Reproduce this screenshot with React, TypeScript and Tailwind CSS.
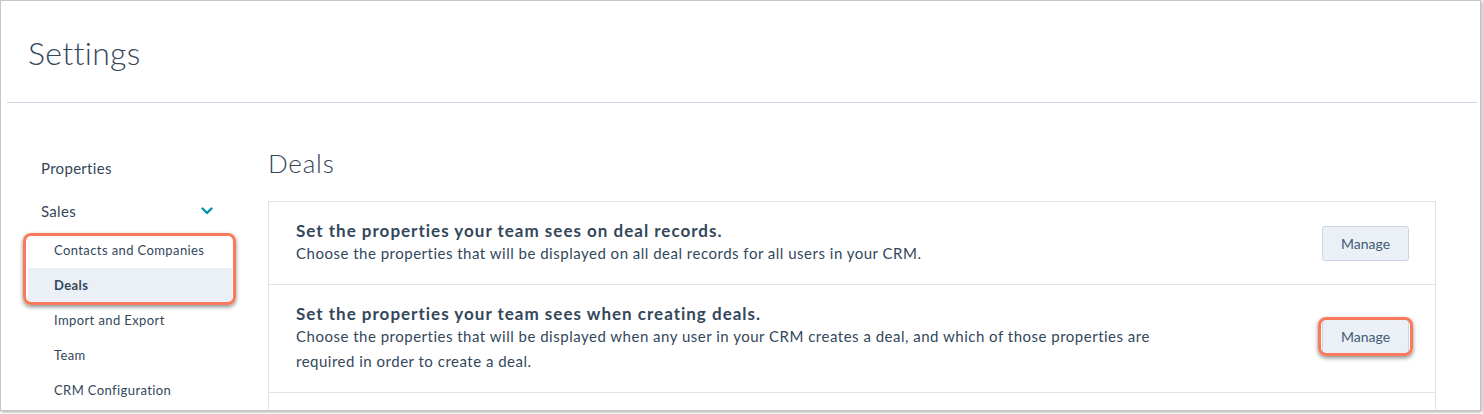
export default function App() {
  return (
    <div className="w-[1483px] h-[414px] bg-white font-[Lato,'Noto_Sans',sans-serif] text-[#33475b]">
      <div className="w-[1481px] h-[411px] border border-[#c6c6c6] shadow-[1px_1px_3px_rgba(0,0,0,0.35)] overflow-hidden bg-white flex flex-col">
        <div className="pt-[32px] pb-[29px] pl-[27px]">
          <h1 className="text-[32px] leading-[40px] font-light tracking-[0.3px]">Settings</h1>
        </div>
        <div className="ml-[6px] mr-[3px] h-px bg-[#cbd6e2] shrink-0" />
        <div className="flex pt-[44px] pl-[27px] pr-[44px]">
          <div className="w-[204px] shrink-0">
            <div className="h-[43px] leading-[43px] pl-[13px] text-[15px] tracking-[0.3px]">Properties</div>
            <div className="h-[43px] flex items-center justify-between pl-[13px] pr-[19px] text-[15px] tracking-[0.3px]">
              <span className="leading-[43px]">Sales</span>
              <svg width="12" height="8" viewBox="0 0 12 8" className="mb-[2px]">
                <polyline points="1.5,1.5 6,6 10.5,1.5" fill="none" stroke="#0091ae" strokeWidth="2.3" strokeLinecap="round" strokeLinejoin="round" />
              </svg>
            </div>
            <div className="relative text-[13px] tracking-[0.4px]">
              <div className="h-[35px] leading-[35px] pl-[26px]">Contacts and Companies</div>
              <div className="h-[35px] leading-[35px] pl-[26px] font-bold bg-[#eaf0f6]">Deals</div>
              <div className="absolute left-[-5px] right-[-4px] top-0 h-[72px] border-[3px] border-[#f97a5b] rounded-[8px] shadow-[0_2px_4px_rgba(0,0,0,0.45)]" />
              <div className="h-[35px] leading-[35px] pl-[26px]">Import and Export</div>
              <div className="h-[35px] leading-[35px] pl-[26px]">Team</div>
              <div className="h-[35px] leading-[35px] pl-[26px]">CRM Configuration</div>
            </div>
          </div>
          <div className="ml-[36px] flex-1">
            <h2 className="text-[26px] leading-[32px] font-light tracking-[0.8px]">Deals</h2>
            <div className="mt-[22px] border border-b-0 border-[#dfe3eb]">
              <div className="flex items-center justify-between pl-[27px] pr-[26px] py-[18px] border-b border-[#dfe3eb]">
                <div>
                  <div className="text-[17px] leading-[21px] font-bold tracking-[1px]">Set the properties your team sees on deal records.</div>
                  <div className="text-[15px] leading-[25px] tracking-[0.5px]">Choose the properties that will be displayed on all deal records for all users in your CRM.</div>
                </div>
                <button className="h-[35px] w-[87px] border border-[#cbd6e2] bg-[#eaf0f6] rounded-[3px] text-[14px] text-[#425b76]">Manage</button>
              </div>
              <div className="flex items-center justify-between pl-[27px] pr-[26px] py-[18px] border-b border-[#dfe3eb]">
                <div className="max-w-[870px]">
                  <div className="text-[17px] leading-[21px] font-bold tracking-[1px]">Set the properties your team sees when creating deals.</div>
                  <div className="text-[15px] leading-[25px] tracking-[0.5px]">Choose the properties that will be displayed when any user in your CRM creates a deal, and which of those properties are required in order to create a deal.</div>
                </div>
                <div className="relative mb-[4px]">
                  <button className="h-[35px] w-[87px] border border-[#cbd6e2] bg-[#eaf0f6] rounded-[3px] text-[14px] text-[#425b76] block">Manage</button>
                  <div className="absolute left-[-4px] right-[-4px] top-[-2px] bottom-[-2px] border-[3px] border-[#f97a5b] rounded-[8px] shadow-[0_2px_4px_rgba(0,0,0,0.45)]" />
                </div>
              </div>
              <div className="h-[60px]" />
            </div>
          </div>
        </div>
      </div>
    </div>
  );
}
